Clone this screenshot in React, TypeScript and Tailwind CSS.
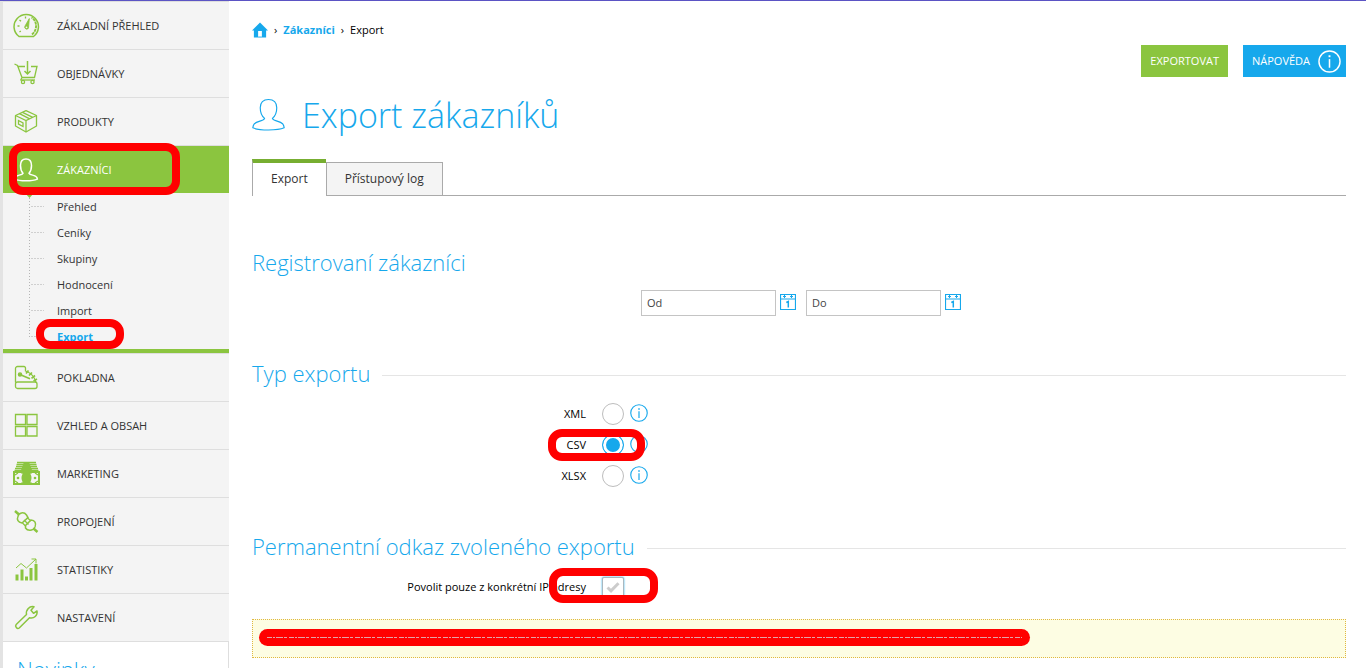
import React from 'react';

type IconProps = { children: React.ReactNode };

function MenuIcon({ children }: IconProps) {
  return (
    <svg
      viewBox="0 0 27 27"
      className="h-[27px] w-[27px] shrink-0"
      fill="none"
      stroke="currentColor"
      strokeWidth="1.3"
      aria-hidden="true"
    >
      {children}
    </svg>
  );
}

const gauge = (
  <MenuIcon>
    <path d="M6 24.500A12.200 12.200 0 1 1 20.500 24.500Z" strokeWidth="1.500" />
    <path d="M19 22.500C24.500 18 24.500 9 18.500 5.500" strokeWidth="1.900" strokeDasharray="3 0.700" />
    <path d="M4.500 14h2M6.500 8l1.500 1.300M12.500 4.500v2M6.500 20l1.300-1" />
    <path d="M16.300 6.500 15.500 16a1.800 1.800 0 1 1-3.600-1.800Z" fill="currentColor" strokeWidth="0.800" />
    <circle cx="13.500" cy="15.300" r="0.900" fill="#f4f4f4" stroke="none" />
  </MenuIcon>
);

const cart = (
  <MenuIcon>
    <path d="M1.500 4 4.500 5.500 9 17.500H21.500L24 6.500H18M5 6.500H12M9 17.500 7.500 20.500" />
    <path d="M14.500 1v13M11.500 11l3 3 3-3" strokeWidth="1.500" />
    <path d="M8 20h14" />
    <circle cx="10" cy="22" r="1.600" />
    <circle cx="19.500" cy="22" r="1.600" />
  </MenuIcon>
);

const box = (
  <MenuIcon>
    <path d="M13 2.700 23.500 7.500V18L13 24 2.500 18V7.500Z" strokeLinejoin="round" />
    <path d="M2.500 7.500 13 12.500 23.500 7.500M13 12.500V24M6.500 5.700 16.700 10.800M9.500 4.400 19.800 9.300" />
    <path d="M5.500 12.500 10 14.800V18.500L5.500 16.200Z" />
  </MenuIcon>
);

const person = (
  <MenuIcon>
    <path
      d="M10 17.300C8.800 16 7.500 12.500 7.500 9.500 7.500 5.500 9.500 3 13 3s5.500 2.500 5.500 6.500c0 3-1.300 6.500-2.500 7.800 1 1.700 5.300 1.800 7 3.200.9.700 1.300 1.700 1.400 2.600-5 2.300-17.800 2.300-22.800 0 .1-.9.500-1.900 1.400-2.600 1.700-1.400 6-1.500 7-3.200Z"
      strokeWidth="1.500"
      strokeLinejoin="round"
    />
  </MenuIcon>
);

const register = (
  <MenuIcon>
    <path d="M2.500 18.500V4.500a2 2 0 0 1 2-2H11a1.500 1.500 0 0 1 1.500 1.500V7c4 1.500 9 5 10.500 11.500" />
    <rect x="2.500" y="18" width="21.500" height="6.500" rx="2" />
    <circle cx="7" cy="10.500" r="1.600" fill="currentColor" />
    <path d="m8 11 9 3.800" strokeWidth="1.600" />
    <path d="M13 9.500 15.500 6.500M16 11.500 19 8.500M18.500 14.300 22 11.500M20.500 17 24 15" strokeWidth="1.700" />
  </MenuIcon>
);

const windows = (
  <MenuIcon>
    <path d="M2.500 2.500H12.500V12.500H2.500ZM14 2.500H24V12.500H14ZM2.500 14.500H12.500V24H2.500ZM14 14.500H24V24H14Z" />
  </MenuIcon>
);

const money = (
  <MenuIcon>
    <path d="M4 2.500H23M3.500 4.500H23.500M3 6.500H24M2 8.500H25M1.500 10.500H25.500" strokeWidth="1.400" />
    <rect x="1" y="12" width="25" height="12" strokeWidth="2" />
    <path d="M11 2h5l3 8v14.500H8V10Z" fill="currentColor" stroke="none" />
    <path d="M9 13.500Q6.500 18 9 22.500M18 13.500Q20.500 18 18 22.500" stroke="#f4f4f4" strokeWidth="1.500" />
    <path d="M2 15 5 13M22 13l3 2M2 21l3 2M22 23l3-2" />
    <circle cx="5" cy="18" r="1.300" fill="currentColor" stroke="none" />
    <circle cx="22" cy="18" r="1.300" fill="currentColor" stroke="none" />
  </MenuIcon>
);

const plugs = (
  <MenuIcon>
    <path d="M2 3 6 6.500M20.500 20.500 24.500 24" strokeWidth="2.400" />
    <path d="M5 8.500C5.500 4.500 11 3.500 13.500 7L15 9.500 9 15C5 14.500 3.500 11.500 5 8.500Z" strokeWidth="1.500" />
    <path d="M12.500 17.500 18 12C22 12 23.500 15.500 22 19 19.500 23.500 14.500 23 12.500 20Z" strokeWidth="1.500" />
    <path d="m11 12 4.500 4.500M9.500 15l3.500 3.500M14 9.500l4 3.500" />
  </MenuIcon>
);

const stats = (
  <MenuIcon>
    <path
      d="M2.500 18.500h3V24.500h-3ZM7.500 13.500h3V24.500h-3ZM12 20.500h3v4h-3ZM16.500 12h3v12.500h-3ZM21.500 8h3v16.500h-3Z"
      fill="currentColor"
      stroke="none"
    />
    <path d="m3 12 5-4.500L13.500 12 23 3M18.500 3h4.500v4.500" strokeWidth="1" />
  </MenuIcon>
);

const wrench = (
  <MenuIcon>
    <path
      d="m3.200 20.500 10.300-10c-.8-4.500 3-9 7.500-7.800L18 6.300l2.500 3L24 7c.8 4.500-3 8-7.500 6.800L6.200 24c-2 1.500-4.700-1.500-3-3.500Z"
      strokeWidth="1.500"
      strokeLinejoin="round"
    />
  </MenuIcon>
);

function InfoIcon({ className }: { className: string }) {
  return (
    <svg viewBox="0 0 24 24" className={className} fill="none" stroke="currentColor" strokeWidth="1.500" aria-hidden="true">
      <circle cx="12" cy="12" r="11" />
      <path d="M12 9.500V18.500" strokeWidth="1.600" />
      <path d="M12 5.500v2" strokeWidth="2" />
    </svg>
  );
}

function MenuRow({ icon, label, active = false }: { icon: React.ReactNode; label: string; active?: boolean }) {
  return (
    <a
      href="#"
      className={
        active
          ? 'flex h-12 items-center gap-[17px] border-t border-[#dedede] bg-[#8bc53f] bg-clip-padding pl-[10px] text-white'
          : 'flex h-12 items-center gap-[17px] border-t border-[#dedede] pl-[10px] text-[#8bc53f]'
      }
    >
      {icon}
      <span className={active ? 'pt-0.5 font-medium text-white' : 'pt-0.5 text-[#333]'}>{label}</span>
    </a>
  );
}

function Mark({ className }: { className: string }) {
  return <span aria-hidden="true" className={'pointer-events-none absolute z-10 border-8 border-[#f00] ' + className} />;
}

function Sidebar() {
  const sub = ['Přehled', 'Ceníky', 'Skupiny', 'Hodnocení', 'Import', 'Export'];
  return (
    <aside className="flex w-[229px] shrink-0 flex-col border-l-[3px] border-[#e3e3e3] bg-[#f4f4f4]">
      <nav>
        <MenuRow icon={gauge} label="ZÁKLADNÍ PŘEHLED" />
        <MenuRow icon={cart} label="OBJEDNÁVKY" />
        <MenuRow icon={box} label="PRODUKTY" />
        <div className="relative">
          <MenuRow icon={person} label="ZÁKAZNÍCI" active />
          <Mark className="-top-0.5 left-1.5 h-[52px] w-[171px] rounded-[14px]" />
        </div>
        <div className="relative border-b-4 border-[#8bc53f]">
          <svg className="absolute left-[22px] top-0" width="20" height="146" fill="none" aria-hidden="true">
            <path d="M0 0h9L4.500 5Z" fill="#8bc53f" />
            <path d="M4.500 5V144" stroke="#b5b5b5" strokeDasharray="1 2" />
            <path
              d="M6 13.500H19M6 39.500H19M6 65.500H19M6 91.500H19M6 117.500H19M6 143.500H19"
              stroke="#cfcfcf"
              strokeDasharray="2 1"
            />
          </svg>
          <ul>
            {sub.map((s) => (
              <li key={s} className="h-[26px] pl-[54px] leading-[27px]">
                <a href="#" className={s === 'Export' ? 'font-bold text-[#16a8ec]' : 'text-[#333]'}>
                  {s}
                </a>
              </li>
            ))}
          </ul>
          <Mark className="left-[33px] top-[126px] h-[30px] w-[88px] rounded-[14px]" />
        </div>
        <MenuRow icon={register} label="POKLADNA" />
        <MenuRow icon={windows} label="VZHLED A OBSAH" />
        <MenuRow icon={money} label="MARKETING" />
        <MenuRow icon={plugs} label="PROPOJENÍ" />
        <MenuRow icon={stats} label="STATISTIKY" />
        <MenuRow icon={wrench} label="NASTAVENÍ" />
      </nav>
      <section className="border-r border-t border-[#dedede] bg-white px-3.5 pb-6 pt-[11px]">
        <h2 className="text-[22px] font-light leading-8 text-[#16a8ec]">Novinky</h2>
      </section>
    </aside>
  );
}

function SectionTitle({ children, line = true }: { children: React.ReactNode; line?: boolean }) {
  return (
    <div className="flex h-8 items-center gap-3">
      <h2 className="whitespace-nowrap pb-[3px] text-[22px] font-light leading-[29px] text-[#16a8ec]">{children}</h2>
      {line && <hr className="grow border-[#e5e5e5]" />}
    </div>
  );
}

function DateField({ name }: { name: string }) {
  return (
    <div className="flex items-center gap-1">
      <input
        type="text"
        aria-label={name}
        placeholder={name}
        className="h-[26px] w-[135px] border border-[#c4c4c4] bg-white px-[5px] pb-0.5 text-[11px] text-[#333] placeholder:text-[#444]"
      />
      <button type="button" aria-label={'Kalendář ' + name} className="pb-0.5 text-[#16a8ec]">
        <svg width="16" height="16" viewBox="0 0 16 16" fill="none" stroke="currentColor" aria-hidden="true">
          <path d="M.5.5h15v15H.5ZM0 5h16" strokeWidth="1.200" />
          <path d="M3 2.500h3M10 2.500h3M4.500 1v3M11.500 1v3" />
          <path d="M6.300 8.500 8.300 7.500v6" strokeWidth="1.500" />
        </svg>
      </button>
    </div>
  );
}

function FormatRow({ name, marked = false }: { name: string; marked?: boolean }) {
  const id = 'format-' + name;
  return (
    <div className="relative flex h-[31px] items-center">
      <label htmlFor={id} className="w-[334px] pt-0.5 text-right text-black">
        {name}
      </label>
      <input
        type="radio"
        id={id}
        name="format"
        defaultChecked={marked}
        className="ml-4 h-[22px] w-[22px] appearance-none rounded-full border border-[#bdbdbd] bg-white checked:border-[#16a8ec] checked:bg-[#16a8ec] checked:shadow-[inset_0_0_0_3px_white]"
      />
      <button type="button" aria-label={'Informace ' + name} className="ml-1.5 pb-px text-[#16a8ec]">
        <InfoIcon className="h-[18px] w-[18px]" />
      </button>
      {marked && <Mark className="left-[296px] top-0 h-8 w-[97px] rounded-[14px]" />}
    </div>
  );
}

export default function App() {
  return (
    <div className="flex h-screen overflow-hidden border-t border-[#5b54c4] bg-white font-['Open_Sans','Noto_Sans',sans-serif] text-[11px]">
      <Sidebar />
      <main className="min-w-0 grow pl-[23px] pr-5 pt-[21px]">
        <nav aria-label="Drobečková navigace" className="flex h-4 items-center gap-1.5 text-black">
          <a href="#" aria-label="Domů" className="text-[#16a8ec]">
            <svg width="16" height="16" viewBox="0 0 17 16" fill="currentColor" aria-hidden="true">
              <path d="M8.500 0 17 8.500H15V16H10.500V9H6.500V16H2V8.500H0Z" />
              <path d="M10.500 15H6.500V16H10.500Z" />
            </svg>
          </a>
          <span>›</span>
          <a href="#" className="font-bold text-[#16a8ec]">
            Zákazníci
          </a>
          <span>›</span>
          <span>Export</span>
        </nav>

        <div className="mt-[7px] flex justify-end gap-[15px] font-medium text-white">
          <button type="button" className="h-8 bg-[#8bc53f] px-[9px]">
            EXPORTOVAT
          </button>
          <button type="button" className="flex h-8 items-center gap-2 bg-[#16a8ec] pl-[9px] pr-[5px]">
            NÁPOVĚDA
            <InfoIcon className="h-[23px] w-[23px]" />
          </button>
        </div>

        <div className="mt-[13px] flex h-[50px] items-center gap-[17px] text-[#16a8ec]">
          <svg width="33" height="34" viewBox="0 0 34 34" fill="none" stroke="currentColor" strokeWidth="1.200" strokeLinejoin="round" aria-hidden="true">
            <path d="M13 20.500C10.500 18.500 8.500 14 8.500 9.500 8.500 4 11.500 1 17 1s8.500 3 8.500 8.500c0 4.500-2 9-4.500 11 1 3 7.500 2.500 10.500 5.500 1 1.200 1.500 2.700 1.700 4.200-7 3-25.400 3-32.400 0C1 28.700 1.500 27.200 2.500 26c3-3 9.500-2.500 10.500-5.500Z" />
          </svg>
          <h1 className="text-[34px] font-light leading-[50px]">Export zákazníků</h1>
        </div>

        <div role="tablist" className="mt-[19px] flex h-[37px] items-end border-b border-[#aaa] text-[12px] text-[#333]">
          <button type="button" role="tab" aria-selected="true" className="-mb-px h-[37px] border-l border-t-4 border-l-[#aaa] border-t-[#77ae31] bg-white px-[18px] pb-0.5">
            Export
          </button>
          <button type="button" role="tab" aria-selected="false" className="h-[33px] border border-b-0 border-[#aaa] bg-[#f4f4f4] px-[18px]">
            Přístupový log
          </button>
        </div>

        <section className="mt-[52px]">
          <SectionTitle line={false}>Registrovaní zákazníci</SectionTitle>
          <div className="mt-[10px] flex justify-center gap-[10px] pl-1">
            <DateField name="Od" />
            <DateField name="Do" />
          </div>
        </section>

        <section className="mt-[43px]">
          <SectionTitle>Typ exportu</SectionTitle>
          <div className="mt-[7px]">
            <FormatRow name="XML" />
            <FormatRow name="CSV" marked />
            <FormatRow name="XLSX" />
          </div>
        </section>

        <section className="mt-[41px]">
          <SectionTitle>Permanentní odkaz zvoleného exportu</SectionTitle>
          <div className="relative mt-2 flex h-[31px] items-center">
            <label htmlFor="ip" className="w-[334px] text-right text-black">
              Povolit pouze z konkrétní IP adresy
            </label>
            <span className="relative ml-4 h-[22px] w-[22px]">
              <input
                type="checkbox"
                id="ip"
                className="block h-[22px] w-[22px] appearance-none rounded-[2px] border border-[#a9b8c0] bg-white shadow-[0_0_2px_#16a8ec]"
              />
              <svg className="pointer-events-none absolute left-1 top-[3px]" width="14" height="14" viewBox="0 0 14 14" fill="none" stroke="#ccc" strokeWidth="3" aria-hidden="true">
                <path d="m1.500 7.500 3.500 3.300 7.500-7.500" />
              </svg>
            </span>
            <Mark className="-top-1 left-[297px] h-[35px] w-[109px] rounded-[14px]" />
          </div>
          <div className="mt-4 border border-dotted border-[#e0b840] bg-[#fdfde3] px-1.5 pb-[11px] pt-[9px]">
            <div className="flex h-[17px] max-w-[771px] items-center rounded-full bg-[#f00] px-2">
              <svg className="h-px w-full" aria-hidden="true">
                <line x1="0" y1="0.5" x2="100%" y2="0.5" stroke="#e3a3a8" strokeDasharray="5 1 2 1 7 1 3 2" />
              </svg>
            </div>
          </div>
        </section>
      </main>
    </div>
  );
}
